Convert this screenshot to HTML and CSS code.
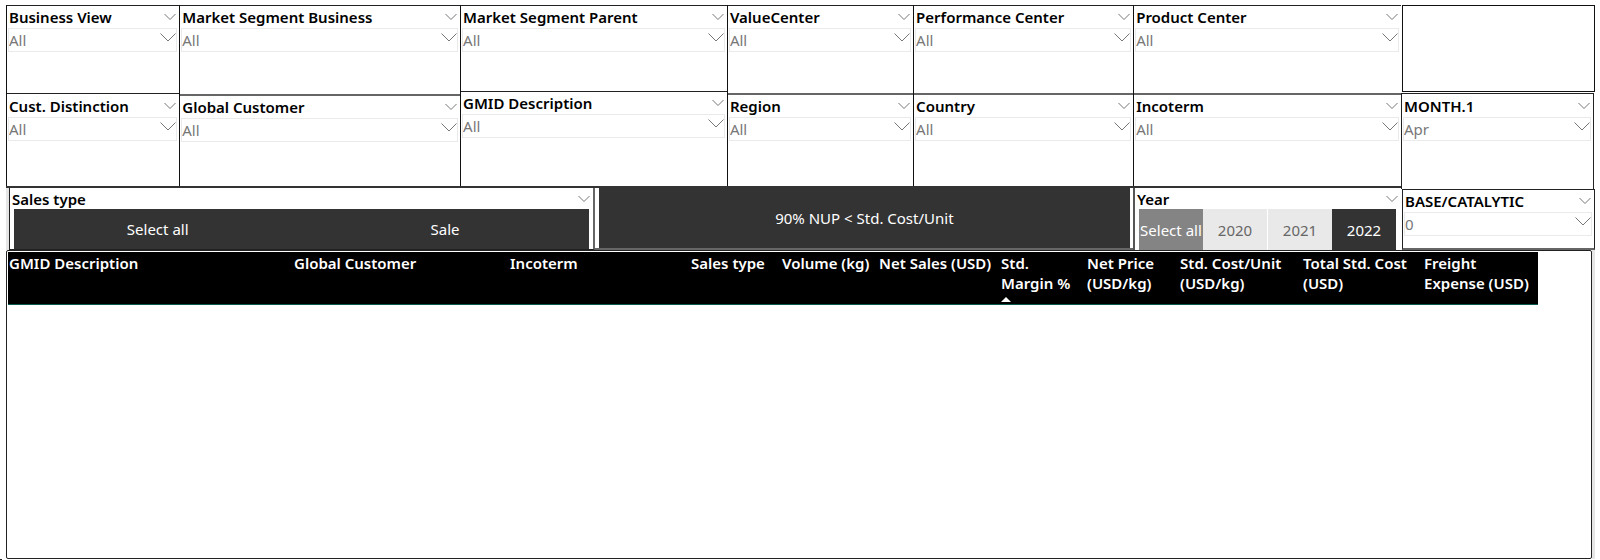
FILE: index.html
```html
<!DOCTYPE html>
<html lang="en">
<head>
<meta charset="utf-8">
<title>Cost report</title>
<link rel="stylesheet" href="styles.css">
</head>
<body>
<svg class="defs" aria-hidden="true">
  <symbol id="chev-s" viewBox="0 0 12 8"><path d="M.5 1 6 6.500 11.500 1"/></symbol>
  <symbol id="chev-l" viewBox="0 0 16 9"><path d="M.5.5 8 8 15.500.5"/></symbol>
</svg>
<main class="report">
  <div class="filters">
    <div class="filters-main">
      <div class="columns">
        <div class="column w-view">
          <section class="card h-88"><div class="card-head"><label for="f1">Business View</label><button class="menu" aria-label="Options"><svg><use href="#chev-s"/></svg></button></div><div class="drop"><select id="f1"><option>All</option></select><svg><use href="#chev-l"/></svg></div></section>
          <section class="card spaced"><div class="card-head"><label for="f2">Cust. Distinction</label><button class="menu" aria-label="Options"><svg><use href="#chev-s"/></svg></button></div><div class="drop"><select id="f2"><option>All</option></select><svg><use href="#chev-l"/></svg></div></section>
        </div>
        <div class="column w-business">
          <section class="card h-89"><div class="card-head"><label for="f3">Market Segment Business</label><button class="menu" aria-label="Options"><svg><use href="#chev-s"/></svg></button></div><div class="drop"><select id="f3"><option>All</option></select><svg><use href="#chev-l"/></svg></div></section>
          <section class="card soft"><div class="card-head"><label for="f4">Global Customer</label><button class="menu" aria-label="Options"><svg><use href="#chev-s"/></svg></button></div><div class="drop"><select id="f4"><option>All</option></select><svg><use href="#chev-l"/></svg></div></section>
        </div>
        <div class="column w-parent">
          <section class="card h-86"><div class="card-head"><label for="f5">Market Segment Parent</label><button class="menu" aria-label="Options"><svg><use href="#chev-s"/></svg></button></div><div class="drop"><select id="f5"><option>All</option></select><svg><use href="#chev-l"/></svg></div></section>
          <section class="card"><div class="card-head"><label for="f6">GMID Description</label><button class="menu" aria-label="Options"><svg><use href="#chev-s"/></svg></button></div><div class="drop"><select id="f6"><option>All</option></select><svg><use href="#chev-l"/></svg></div></section>
        </div>
        <div class="column w-value">
          <section class="card h-88"><div class="card-head"><label for="f7">ValueCenter</label><button class="menu" aria-label="Options"><svg><use href="#chev-s"/></svg></button></div><div class="drop"><select id="f7"><option>All</option></select><svg><use href="#chev-l"/></svg></div></section>
          <section class="card soft"><div class="card-head"><label for="f8">Region</label><button class="menu" aria-label="Options"><svg><use href="#chev-s"/></svg></button></div><div class="drop"><select id="f8"><option>All</option></select><svg><use href="#chev-l"/></svg></div></section>
        </div>
        <div class="column w-perf">
          <section class="card h-88"><div class="card-head"><label for="f9">Performance Center</label><button class="menu" aria-label="Options"><svg><use href="#chev-s"/></svg></button></div><div class="drop"><select id="f9"><option>All</option></select><svg><use href="#chev-l"/></svg></div></section>
          <section class="card soft"><div class="card-head"><label for="f10">Country</label><button class="menu" aria-label="Options"><svg><use href="#chev-s"/></svg></button></div><div class="drop"><select id="f10"><option>All</option></select><svg><use href="#chev-l"/></svg></div></section>
        </div>
        <div class="column w-product">
          <section class="card h-88"><div class="card-head"><label for="f11">Product Center</label><button class="menu" aria-label="Options"><svg><use href="#chev-s"/></svg></button></div><div class="drop"><select id="f11"><option>All</option></select><svg><use href="#chev-l"/></svg></div></section>
          <section class="card soft"><div class="card-head"><label for="f12">Incoterm</label><button class="menu" aria-label="Options"><svg><use href="#chev-s"/></svg></button></div><div class="drop"><select id="f12"><option>All</option></select><svg><use href="#chev-l"/></svg></div></section>
        </div>
      </div>
      <div class="tiles-row">
        <section class="sales">
          <div class="card-head"><h2>Sales type</h2><button class="menu" aria-label="Options"><svg><use href="#chev-s"/></svg></button></div>
          <div class="tiles"><button class="tile dark">Select all</button><button class="tile dark">Sale</button></div>
        </section>
        <section class="action"><button class="tile dark">90% NUP &lt; Std. Cost/Unit</button></section>
        <section class="year">
          <div class="card-head"><h2>Year</h2><button class="menu" aria-label="Options"><svg><use href="#chev-s"/></svg></button></div>
          <div class="tiles"><button class="tile mid">Select all</button><button class="tile light">2020</button><button class="tile light split">2021</button><button class="tile dark">2022</button></div>
        </section>
      </div>
    </div>
    <div class="filters-side">
      <section class="blank"></section>
      <section class="month"><div class="card-head"><label for="f13">MONTH.1</label><button class="menu" aria-label="Options"><svg><use href="#chev-s"/></svg></button></div><div class="drop"><select id="f13"><option>Apr</option></select><svg><use href="#chev-l"/></svg></div></section>
      <section class="base"><div class="card-head"><label for="f14">BASE/CATALYTIC</label><button class="menu" aria-label="Options"><svg><use href="#chev-s"/></svg></button></div><div class="drop"><select id="f14"><option>0</option></select><svg><use href="#chev-l"/></svg></div></section>
    </div>
  </div>
  <div class="results">
    <div class="results-frame">
      <table>
        <colgroup><col class="c1"><col class="c2"><col class="c3"><col class="c4"><col class="c5"><col class="c6"><col class="c7"><col class="c8"><col class="c9"><col class="c10"><col class="c11"></colgroup>
        <thead><tr>
          <th>GMID Description</th><th>Global Customer</th><th>Incoterm</th><th>Sales type</th><th>Volume (kg)</th><th>Net Sales (USD)</th>
          <th aria-sort="ascending">Std.<br>Margin %<svg class="sort" viewBox="0 0 10 5"><path d="M0 5 5 0l5 5z"/></svg></th>
          <th>Net Price<br>(USD/kg)</th><th>Std. Cost/Unit<br>(USD/kg)</th><th>Total Std. Cost<br>(USD)</th><th>Freight<br>Expense (USD)</th>
        </tr></thead>
      </table>
    </div>
  </div>
</main>
</body>
</html>
```
FILE: styles.css
```css
* { box-sizing: border-box; }
body {
  margin: 0;
  background: #fff;
  color: #000;
  font: 15px/20px "Noto Sans", "Open Sans", sans-serif;
}
button, select { font: inherit; }
.defs { position: absolute; width: 0; height: 0; }
.report {
  position: relative;
  display: flex;
  flex-direction: column;
  min-height: 100vh;
  padding: 5px 5px 1px 6px;
}
.report::after {
  content: "";
  position: absolute;
  left: 0;
  bottom: 0;
  width: 2px;
  height: 1px;
  background: #222;
}
.filters { display: flex; height: 245px; }
.filters-main { flex: 1395 1 0; min-width: 0; display: flex; flex-direction: column; }
.filters-side { flex: 194 1 0; min-width: 0; display: flex; flex-direction: column; }

.columns { display: flex; height: 183px; border-bottom: 2px solid #333; }
.column { display: flex; flex-direction: column; min-width: 0; border-left: 1px solid #111; }
.w-view { flex: 173 1 0; }
.w-business { flex: 281 1 0; }
.w-parent { flex: 267 1 0; }
.w-value { flex: 186 1 0; }
.w-perf { flex: 220 1 0; }
.w-product { flex: 268 1 0; }
.card { flex: 1; border-top: 1px solid #222; }
.card.soft { border-top: 2px solid #666; }
.card.spaced { padding-top: 1px; }
.card.h-86 { flex: none; height: 86px; }
.card.h-88 { flex: none; height: 88px; }
.card.h-89 { flex: none; height: 89px; }

.card-head {
  display: flex;
  align-items: center;
  justify-content: space-between;
  height: 22px;
  padding: 0 3px 0 2px;
  font-weight: 600;
  white-space: nowrap;
}
.card-head h2 { margin: 0; font: inherit; }
.menu { display: flex; padding: 0; border: 0; background: none; }
.menu svg { width: 12px; height: 8px; }
.menu svg, .drop svg { fill: none; stroke: #777; stroke-width: 1; }
.drop { position: relative; height: 24px; margin: 0 2px 0 1px; }
.drop select {
  display: block;
  width: 100%;
  height: 24px;
  padding: 0;
  border: 1px solid #eaeaea;
  border-radius: 0;
  background: #fff;
  color: #777;
  appearance: none;
}
.drop svg { position: absolute; top: 5px; right: 1px; width: 16px; height: 9px; pointer-events: none; }

.tiles-row { flex: 1; display: flex; border-left: 3px solid #e5e5e5; }
.tiles-row .card-head { height: 21px; }
.sales { flex: 587 1 0; display: flex; flex-direction: column; border: solid #222; border-width: 0 2px 1px 1px; border-right-color: #666; }
.sales .tiles { padding: 0 4px; }
.action { flex: 535 1 0; display: flex; padding: 0 3px 0 4px; border-bottom: 2px solid #666; }
.year { flex: 268 1 0; display: flex; flex-direction: column; border-left: 2px solid #555; }
.year .tiles { padding: 0 5px 0 4px; }
.tiles { flex: 1; display: flex; }
.tile { flex: 1 1 auto; width: 0; min-width: 0; padding: 0; border: 0; white-space: nowrap; }
.dark { background: #333; color: #fff; }
.mid { background: #848484; color: #fff; }
.light { background: #e9e9e9; color: #666; }
.split { border-left: 1px solid #fff; }

.blank { height: 87px; margin: 0 0 1px 1px; border: 1px solid #111; }
.month { height: 96px; margin-right: 1px; padding-top: 1px; border: solid #222; border-width: 1px 1px 0; }
.base { flex: 1; margin-left: 1px; border: 1px solid #222; border-bottom: 2px solid #666; }

.results { flex: 1; display: flex; border-right: 3px solid #e5e5e5; }
.results-frame {
  flex: 1;
  padding-top: 1px;
  border: 1px solid #222;
  border-radius: 2px;
}
table { width: 96.6%; margin-left: 1px; border-collapse: collapse; table-layout: fixed; }
th {
  height: 52px;
  padding: 1px 0 0 1px;
  border-bottom: 1px solid #0b5a50;
  background: #000;
  color: #fff;
  font-weight: 600;
  text-align: left;
  vertical-align: top;
  white-space: nowrap;
}
.sort { display: block; width: 10px; height: 5px; margin-top: 4px; fill: #fff; }
.c1 { width: 285px; }
.c2 { width: 216px; }
.c3 { width: 181px; }
.c4 { width: 91px; }
.c5 { width: 97px; }
.c6 { width: 122px; }
.c7 { width: 86px; }
.c8 { width: 93px; }
.c9 { width: 123px; }
.c10 { width: 121px; }
.c11 { width: 115px; }
```
